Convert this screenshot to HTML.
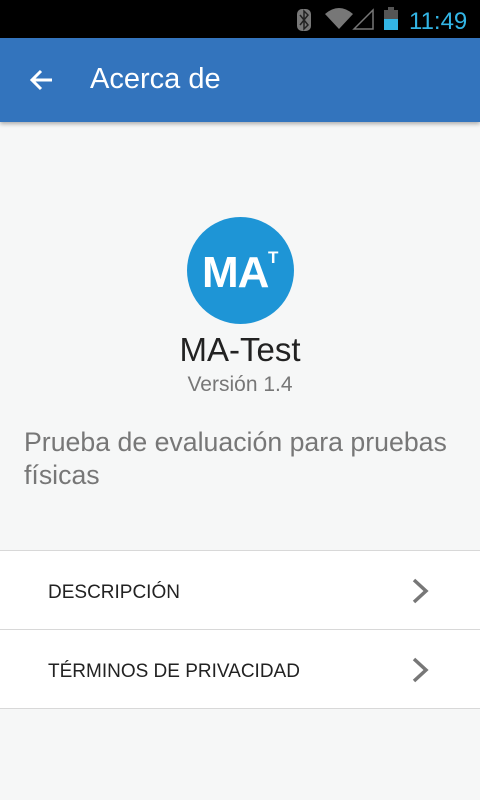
<!DOCTYPE html>
<html><head><meta charset="utf-8"><style>
*{margin:0;padding:0;box-sizing:border-box}
body{width:480px;height:800px;background:#f6f7f7;font-family:"Liberation Sans",sans-serif;position:relative;overflow:hidden}
.sb{position:absolute;top:0;left:0;width:480px;height:38px;background:#000}
.ab{position:absolute;top:38px;left:0;width:480px;height:84px;background:#3374bd;box-shadow:0 2px 4px rgba(0,0,0,.3)}
.t{position:absolute;color:#fff}
.row{position:absolute;left:0;width:480px;height:79px;background:#fff;border-bottom:1px solid #d8d8d8}
.row span{position:absolute;left:48px;top:31px;font-size:19px;color:#222}
.row svg{position:absolute;left:410px;top:26px}
</style></head><body>
<div class="sb">
<svg width="480" height="38" style="position:absolute;top:0;left:0">
<rect x="297" y="9" width="14" height="22" rx="5" fill="#777"/>
<path d="M300 15 L308 25 L304 29 V11 L308 15 L300 25" stroke="#222" stroke-width="1.5" fill="none"/>
<path d="M325 14 Q339 2 353 14 L339 29 Z" fill="#777"/>
<path d="M354 29 L373 10 V29 Z" fill="none" stroke="#777" stroke-width="1.5"/>
<rect x="384" y="10" width="14" height="20" fill="#555"/><rect x="388" y="7" width="6" height="3" fill="#555"/>
<rect x="384" y="19" width="14" height="11" fill="#33b5e5"/>
<text x="409" y="29" font-size="24" fill="#33b5e5" font-family="Liberation Sans">11:49</text>
</svg></div>
<div class="ab">
<svg width="30" height="30" style="position:absolute;left:27px;top:27px"><path d="M25 15 H5 M14 6 L5 15 L14 24" stroke="#fff" stroke-width="3" fill="none"/></svg>
<div class="t" style="left:90px;top:25px;font-size:29px">Acerca de</div>
</div>
<div style="position:absolute;left:187px;top:217px;width:107px;height:107px;border-radius:50%;background:#1e95d6"></div>
<div style="position:absolute;left:202px;top:248px;color:#fff;font-weight:bold;font-size:44px;letter-spacing:-1px">MA</div>
<div style="position:absolute;left:268px;top:248px;color:#fff;font-weight:bold;font-size:17px">T</div>
<div style="position:absolute;left:0;width:480px;top:331px;text-align:center;font-size:33px;color:#222">MA-Test</div>
<div style="position:absolute;left:0;width:480px;top:373px;text-align:center;font-size:21px;color:#777">Versión 1.4</div>
<div style="position:absolute;left:24px;top:426px;font-size:26.7px;color:#777;line-height:33px;width:450px">Prueba de evaluación para pruebas físicas</div>
<div style="position:absolute;left:0;top:550px;width:480px;border-top:1px solid #d8d8d8"></div>
<div class="row" style="top:551px"><span>DESCRIPCIÓN</span><svg width="20" height="28"><path d="M4 3 L16 14 L4 25" stroke="#777" stroke-width="3.5" fill="none"/></svg></div>
<div class="row" style="top:630px"><span>TÉRMINOS DE PRIVACIDAD</span><svg width="20" height="28"><path d="M4 3 L16 14 L4 25" stroke="#777" stroke-width="3.5" fill="none"/></svg></div>
</body></html>
